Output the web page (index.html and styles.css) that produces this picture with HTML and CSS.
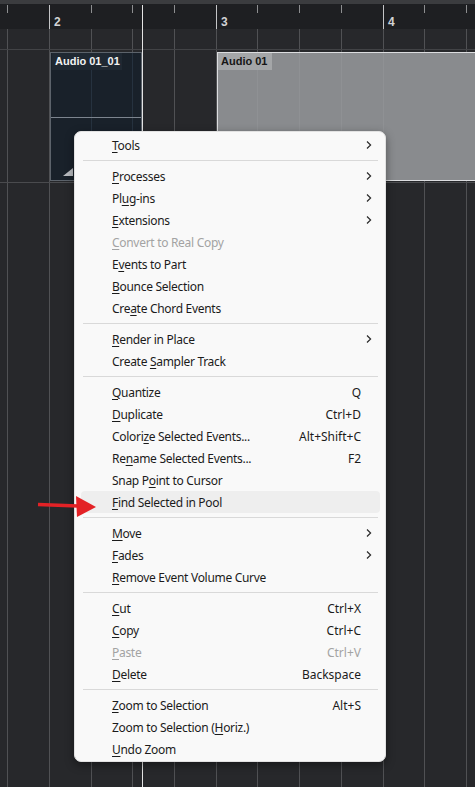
FILE: index.html
```html
<!DOCTYPE html>
<html lang="en">
<head>
    <meta charset="UTF-8">
    <title>Arrange - Context Menu</title>
    <link rel="stylesheet" href="styles.css">
</head>
<body>
    <div class="arrange">

        <!-- Ruler and grid -->
        <svg class="timeline" width="475" height="787" viewBox="0 0 475 787" shape-rendering="crispEdges">
            <rect x="0" y="0" width="475" height="4" fill="#3b3c3f"/>
            <rect x="0" y="4" width="475" height="25" fill="#1e1f22"/>
            <rect x="0" y="29" width="475" height="758" fill="#27282b"/>

            <!-- beat ticks -->
            <g stroke="#8d8e90">
                <line x1="7.5" y1="5" x2="7.5" y2="13"/>
                <line x1="91.5" y1="5" x2="91.5" y2="13"/>
                <line x1="132.5" y1="5" x2="132.5" y2="13"/>
                <line x1="174.5" y1="5" x2="174.5" y2="13"/>
                <line x1="257.5" y1="5" x2="257.5" y2="13"/>
                <line x1="299.5" y1="5" x2="299.5" y2="13"/>
                <line x1="341.5" y1="5" x2="341.5" y2="13"/>
                <line x1="424.5" y1="5" x2="424.5" y2="13"/>
                <line x1="466.5" y1="5" x2="466.5" y2="13"/>
            </g>
            <!-- bar ticks -->
            <g stroke="#c4c5c7">
                <line x1="49.5" y1="5" x2="49.5" y2="29"/>
                <line x1="216.5" y1="5" x2="216.5" y2="29"/>
                <line x1="383.5" y1="5" x2="383.5" y2="29"/>
            </g>

            <!-- grid -->
            <g stroke="#505154">
                <line x1="7.5" y1="29" x2="7.5" y2="787"/>
                <line x1="49.5" y1="29" x2="49.5" y2="787"/>
                <line x1="91.5" y1="29" x2="91.5" y2="787"/>
                <line x1="132.5" y1="29" x2="132.5" y2="787"/>
                <line x1="174.5" y1="29" x2="174.5" y2="787"/>
                <line x1="216.5" y1="29" x2="216.5" y2="787"/>
                <line x1="257.5" y1="29" x2="257.5" y2="787"/>
                <line x1="299.5" y1="29" x2="299.5" y2="787"/>
                <line x1="341.5" y1="29" x2="341.5" y2="787"/>
                <line x1="383.5" y1="29" x2="383.5" y2="787"/>
                <line x1="424.5" y1="29" x2="424.5" y2="787"/>
                <line x1="466.5" y1="29" x2="466.5" y2="787"/>
            </g>
            <line x1="0" y1="49.5" x2="475" y2="49.5" stroke="#424346"/>
            <line x1="0" y1="182.5" x2="475" y2="182.5" stroke="#4a4b4e"/>

            <!-- cursor -->
            <line x1="142.5" y1="5" x2="142.5" y2="787" stroke="#e4e4e4"/>

            <g class="bar-num">
                <text x="54" y="26">2</text>
                <text x="221" y="26">3</text>
                <text x="388" y="26">4</text>
            </g>
        </svg>

        <!-- Events -->
        <div class="clip clip-dark">
            <div class="clip-head">
                <span class="clip-name">Audio 01_01</span>
            </div>
            <div class="clip-foot">
                <svg width="10" height="8" viewBox="0 0 10 8"><polygon points="0,8 10,8 10,0" fill="#b9bcc0"/></svg>
            </div>
        </div>

        <div class="clip clip-gray">
            <span class="clip-name">Audio 01</span>
        </div>

        <!-- Context menu -->
        <div class="menu">
            <div class="item"><span class="label"><u>T</u>ools</span><span class="key"></span><span class="sub"><svg width="6" height="8" viewBox="0 0 6 8"><path d="M1 0.5 L4.6 4 L1 7.5" fill="none" stroke="#2a2a2a" stroke-width="1.2"/></svg></span></div>
            <div class="sep"></div>
            <div class="item"><span class="label"><u>P</u>rocesses</span><span class="key"></span><span class="sub"><svg width="6" height="8" viewBox="0 0 6 8"><path d="M1 0.5 L4.6 4 L1 7.5" fill="none" stroke="#2a2a2a" stroke-width="1.2"/></svg></span></div>
            <div class="item"><span class="label">Pl<u>u</u>g-ins</span><span class="key"></span><span class="sub"><svg width="6" height="8" viewBox="0 0 6 8"><path d="M1 0.5 L4.6 4 L1 7.5" fill="none" stroke="#2a2a2a" stroke-width="1.2"/></svg></span></div>
            <div class="item"><span class="label"><u>E</u>xtensions</span><span class="key"></span><span class="sub"><svg width="6" height="8" viewBox="0 0 6 8"><path d="M1 0.5 L4.6 4 L1 7.5" fill="none" stroke="#2a2a2a" stroke-width="1.2"/></svg></span></div>
            <div class="item disabled"><span class="label"><u>C</u>onvert to Real Copy</span><span class="key"></span><span class="sub"></span></div>
            <div class="item"><span class="label">E<u>v</u>ents to Part</span><span class="key"></span><span class="sub"></span></div>
            <div class="item"><span class="label"><u>B</u>ounce Selection</span><span class="key"></span><span class="sub"></span></div>
            <div class="item"><span class="label">Cre<u>a</u>te Chord Events</span><span class="key"></span><span class="sub"></span></div>
            <div class="sep"></div>
            <div class="item"><span class="label"><u>R</u>ender in Place</span><span class="key"></span><span class="sub"><svg width="6" height="8" viewBox="0 0 6 8"><path d="M1 0.5 L4.6 4 L1 7.5" fill="none" stroke="#2a2a2a" stroke-width="1.2"/></svg></span></div>
            <div class="item"><span class="label">Create <u>S</u>ampler Track</span><span class="key"></span><span class="sub"></span></div>
            <div class="sep"></div>
            <div class="item"><span class="label"><u>Q</u>uantize</span><span class="key">Q</span><span class="sub"></span></div>
            <div class="item"><span class="label"><u>D</u>uplicate</span><span class="key">Ctrl+D</span><span class="sub"></span></div>
            <div class="item"><span class="label">Colori<u>z</u>e Selected Events...</span><span class="key">Alt+Shift+C</span><span class="sub"></span></div>
            <div class="item"><span class="label">Re<u>n</u>ame Selected Events...</span><span class="key">F2</span><span class="sub"></span></div>
            <div class="item"><span class="label">Snap P<u>o</u>int to Cursor</span><span class="key"></span><span class="sub"></span></div>
            <div class="item active"><span class="label"><u>F</u>ind Selected in Pool</span><span class="key"></span><span class="sub"></span></div>
            <div class="sep"></div>
            <div class="item"><span class="label"><u>M</u>ove</span><span class="key"></span><span class="sub"><svg width="6" height="8" viewBox="0 0 6 8"><path d="M1 0.5 L4.6 4 L1 7.5" fill="none" stroke="#2a2a2a" stroke-width="1.2"/></svg></span></div>
            <div class="item"><span class="label"><u>F</u>ades</span><span class="key"></span><span class="sub"><svg width="6" height="8" viewBox="0 0 6 8"><path d="M1 0.5 L4.6 4 L1 7.5" fill="none" stroke="#2a2a2a" stroke-width="1.2"/></svg></span></div>
            <div class="item"><span class="label"><u>R</u>emove Event Volume Curve</span><span class="key"></span><span class="sub"></span></div>
            <div class="sep"></div>
            <div class="item"><span class="label"><u>C</u>ut</span><span class="key">Ctrl+X</span><span class="sub"></span></div>
            <div class="item"><span class="label"><u>C</u>opy</span><span class="key">Ctrl+C</span><span class="sub"></span></div>
            <div class="item disabled"><span class="label"><u>P</u>aste</span><span class="key">Ctrl+V</span><span class="sub"></span></div>
            <div class="item"><span class="label"><u>D</u>elete</span><span class="key">Backspace</span><span class="sub"></span></div>
            <div class="sep"></div>
            <div class="item"><span class="label"><u>Z</u>oom to Selection</span><span class="key">Alt+S</span><span class="sub"></span></div>
            <div class="item"><span class="label">Zoom to Selection (<u>H</u>oriz.)</span><span class="key"></span><span class="sub"></span></div>
            <div class="item"><span class="label"><u>U</u>ndo Zoom</span><span class="key"></span><span class="sub"></span></div>
        </div>

        <!-- Red pointer -->
        <svg class="pointer" width="62" height="25" viewBox="0 0 62 25">
            <line x1="2" y1="10.5" x2="42" y2="12" stroke="#e32226" stroke-width="3.5"/>
            <polygon points="40,2 60,13 41,23" fill="#e32226"/>
        </svg>
    </div>
</body>
</html>
```

FILE: styles.css
```css
/* General */
body {
    margin: 0;
    background-color: #27282b;
    overflow: hidden;
}

.arrange {
    position: relative;
    width: 475px;
    height: 787px;
    overflow: hidden;
}

.timeline {
    display: block;
}

.bar-num text {
    font-family: "Liberation Sans", Arial, sans-serif;
    font-weight: bold;
    font-size: 12px;
    fill: #d2d3d5;
}

/* Events */
.clip {
    position: absolute;
    top: 52px;
    height: 129px;
    box-sizing: border-box;
    display: flex;
    flex-direction: column;
    align-items: flex-start;
}

.clip-name {
    display: block;
    height: 17px;
    line-height: 17px;
    padding: 0 3px;
    font-family: "Liberation Sans", Arial, sans-serif;
    font-weight: bold;
    font-size: 11px;
    white-space: nowrap;
}

.clip-dark {
    left: 50px;
    width: 92px;
    background-color: #19212a;
    border: 1px solid #5c636b;
    background-image: linear-gradient(to right,
        transparent 40px, #26323f 40px, #26323f 41px, transparent 41px,
        transparent 81px, #26323f 81px, #26323f 82px, transparent 82px);
}

.clip-head {
    height: 64px;
    align-self: stretch;
}

.clip-dark .clip-name {
    margin-left: 1px;
    width: 64px;
    background-color: #1f2832;
    color: #f2f2f2;
}

.clip-foot {
    flex: 1;
    align-self: stretch;
    border-top: 1px solid #7c848e;
    display: flex;
    align-items: flex-end;
    padding: 0 0 4px 12px;
}

.clip-foot svg {
    display: block;
}

.clip-gray {
    left: 217px;
    width: 270px;
    background-color: #898b8e;
    border: 1px solid #dcdddf;
    background-image: linear-gradient(to right,
        transparent 39px, #8f9194 39px, #8f9194 40px, transparent 40px,
        transparent 81px, #8f9194 81px, #8f9194 82px, transparent 82px,
        transparent 123px, #8f9194 123px, #8f9194 124px, transparent 124px,
        transparent 165px, #8f9194 165px, #8f9194 166px, transparent 166px);
}

.clip-gray .clip-name {
    width: 48px;
    background-color: #a4a6a8;
    color: #161616;
}

/* Context menu */
.menu {
    position: absolute;
    left: 74px;
    top: 131px;
    width: 312px;
    box-sizing: border-box;
    padding: 2px 5px 1px 6px;
    background-color: #f9f9f9;
    border: 1px solid #e2e2e2;
    border-radius: 7px;
    box-shadow: 0 3px 10px rgba(0, 0, 0, 0.4);
    font-family: "Noto Sans", sans-serif;
    font-size: 12px;
    letter-spacing: -0.3px;
    color: #1b1b1b;
}

.item {
    display: flex;
    align-items: center;
    height: 22px;
    padding-left: 31px;
    border-radius: 4px;
    white-space: nowrap;
}

.item .label {
    flex: 1;
}

.item .key {
    letter-spacing: 0;
}

.item u {
    text-underline-offset: 2px;
    text-decoration-thickness: 1px;
}

.item .sub {
    width: 19px;
    box-sizing: border-box;
    padding-right: 8px;
    display: flex;
    justify-content: flex-end;
}

.item .sub svg {
    display: block;
}

.item.active {
    background-color: #eeeeee;
}

.item.disabled {
    color: #a3a3a3;
}

.sep {
    height: 1px;
    margin: 4px 2px;
    background-color: #d9d9d9;
}

/* Annotation */
.pointer {
    position: absolute;
    left: 36px;
    top: 494px;
}
```
